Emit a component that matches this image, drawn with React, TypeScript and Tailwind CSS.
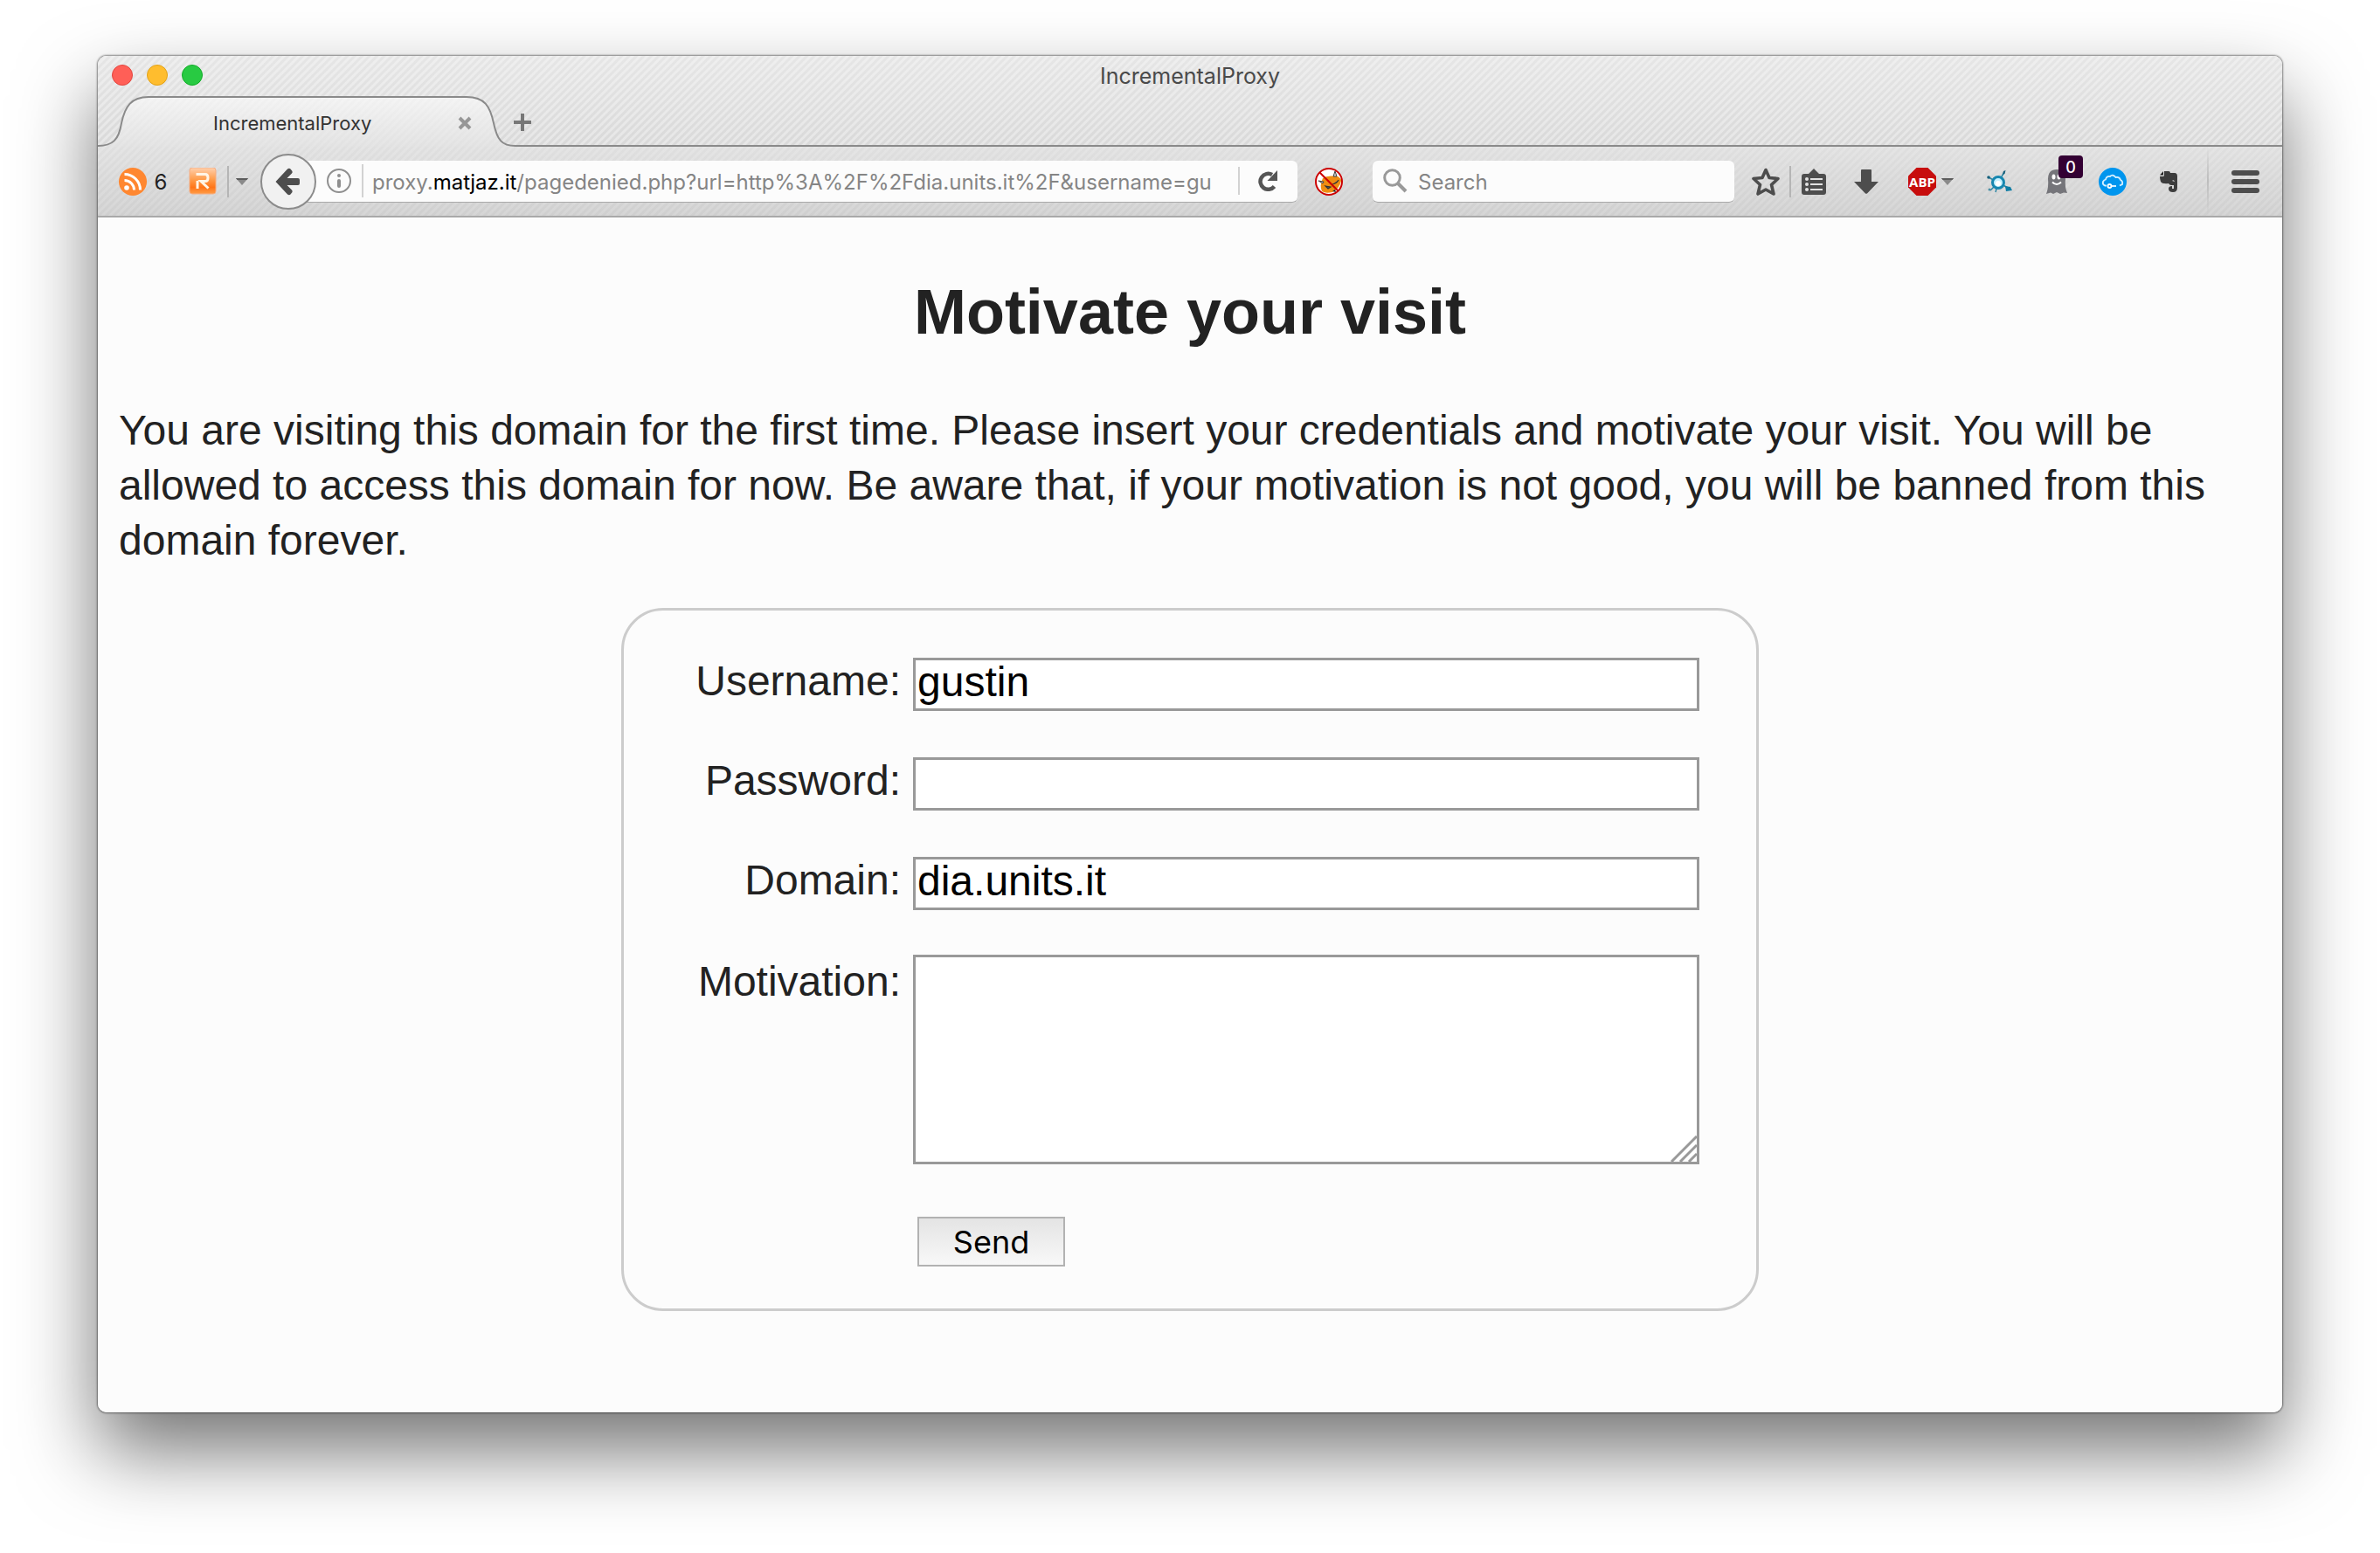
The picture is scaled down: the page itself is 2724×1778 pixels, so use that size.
import React from "react";

const stripes =
  "bg-[repeating-linear-gradient(135deg,rgba(255,255,255,0.35)_0px,rgba(255,255,255,0.35)_2px,rgba(255,255,255,0)_3px,rgba(255,255,255,0)_5px,rgba(255,255,255,0.35)_6px)]";

function Caret() {
  return (
    <svg className="h-2 w-3.5 shrink-0" viewBox="0 0 14 8">
      <path d="M0 0h14L7 8z" fill="#8a8a8a" />
      <path d="M0 0h14l-1.5 2h-11z" fill="#5d5d5d" />
    </svg>
  );
}

function TitleBar() {
  return (
    <div className="relative flex h-[46px] items-center justify-center">
      <div className="absolute left-4 top-2.5 flex gap-4">
        <button aria-label="Close" className="size-6 rounded-full border border-[#e2463f] bg-[#ff5f57]" />
        <button aria-label="Minimize" className="size-6 rounded-full border border-[#e1a116] bg-[#ffbd2e]" />
        <button aria-label="Zoom" className="size-6 rounded-full border border-[#12ac28] bg-[#28ca42]" />
      </div>
      <h2 className="text-[25px] leading-8 text-[#4a4a4a]">IncrementalProxy</h2>
    </div>
  );
}

function TabStrip() {
  return (
    <div className="relative flex h-[58px] items-end">
      <svg className="absolute inset-0 h-full w-full" aria-hidden="true">
        <defs>
          <linearGradient id="tab" x1="0" y1="0" x2="0" y2="1">
            <stop offset="0" stopColor="#f8f8f8" />
            <stop offset="1" stopColor="#e4e4e4" />
          </linearGradient>
        </defs>
        <path
          d="M0 58C17 58 24 50 27 31C31 12 38 1 58 1H422C443 1 449 12 453 31C457 50 462 58 478 58z"
          fill="url(#tab)"
          fillOpacity="0.75"
        />
        <path
          d="M0 57C17 57 24 50 27 31C31 12 38 1 58 1H422C443 1 449 12 453 31C457 50 462 57 478 57H4000"
          fill="none"
          stroke="#8a8a8a"
          strokeWidth="2"
        />
      </svg>
      <div className="relative flex h-full w-[476px] items-center pt-1">
        <span className="flex-1 pl-[132px] text-[22px] text-[#333]">IncrementalProxy</span>
        <button aria-label="Close tab" className="mr-[48px]">
          <svg className="size-4" viewBox="0 0 16 16">
            <path d="M2 2L14 14M14 2L2 14" stroke="#979797" strokeWidth="4" />
          </svg>
        </button>
      </div>
      <button aria-label="New tab" className="relative mb-[18px]">
        <svg className="size-5" viewBox="0 0 20 20">
          <path d="M10 0V20M0 10H20" stroke="#777" strokeWidth="4" />
        </svg>
      </button>
    </div>
  );
}

function RssIcon() {
  return (
    <svg className="size-8" viewBox="0 0 32 32">
      <circle cx="16" cy="16" r="16" fill="#ff8730" />
      <circle cx="9" cy="23" r="2.8" fill="#fff" />
      <path d="M6.500 14.500A11 11 0 0 1 17.500 25.500M6.500 7.500A18 18 0 0 1 24.500 25.500" fill="none" stroke="#fff" strokeWidth="3" />
    </svg>
  );
}

function ReaderIcon() {
  return (
    <svg className="h-[31px] w-8" viewBox="0 0 32 31">
      <defs>
        <linearGradient id="reader" x1="0" y1="0" x2="0" y2="1">
          <stop offset="0" stopColor="#ffd0ad" />
          <stop offset="0.45" stopColor="#ff9c4a" />
          <stop offset="0.75" stopColor="#ff7518" />
          <stop offset="1" stopColor="#ff9d48" />
        </linearGradient>
      </defs>
      <rect x="1" y="0" width="30" height="30" rx="3" fill="url(#reader)" stroke="#f5ad83" />
      <path d="M10 24V15M8.500 7.500H19Q22 7.500 22 11.500T19 15.500H14L22.500 23.500" fill="none" stroke="#fff5e6" strokeWidth="3" />
    </svg>
  );
}

function BackButton() {
  return (
    <button aria-label="Back" className="relative z-10 grid size-16 shrink-0 place-items-center rounded-full border-2 border-[#8b8b8b] bg-[#f1f1f1]">
      <svg className="size-8" viewBox="0 0 32 32">
        <path
          d="M1.500 16L15 1.500Q17 0 18.500 1.500L20.500 4Q21 5.500 20 6.500L14.500 12H27Q29 12 29 14V18Q29 20 27 20H14.500L20 25.500Q21 26.500 20.500 28L18.500 30.500Q17 32 15 30.500z"
          fill="#4d4d4d"
        />
      </svg>
    </button>
  );
}

function UrlBar() {
  return (
    <div className="-ml-6 flex h-12 min-w-0 flex-1 items-center rounded-r-md border-b border-[#a9a9a9] bg-[#fcfcfc] pl-9">
      <button aria-label="Site information">
        <svg className="size-7" viewBox="0 0 28 28">
          <circle cx="14" cy="14" r="13" fill="none" stroke="#8f8f8f" strokeWidth="2" />
          <circle cx="14" cy="8" r="2" fill="#8f8f8f" />
          <rect x="12" y="12" width="4" height="10" rx="2" fill="#8f8f8f" />
        </svg>
      </button>
      <span className="ml-3 h-[38px] w-0.5 bg-[#d2d2d2]" />
      <div className="ml-2.5 min-w-0 flex-1 overflow-hidden whitespace-nowrap pt-1 text-[24px] text-[#858585]">
        proxy.<span className="text-black">matjaz.it</span>/pagedenied.php?url=http%3A%2F%2Fdia.units.it%2F&amp;username=gu
      </div>
      <span className="h-8 w-0.5 bg-[#d2d2d2]" />
      <button aria-label="Reload" className="ml-5 mr-[22px]">
        <svg className="size-6" viewBox="0 0 24 24">
          <path d="M19.500 18.500A9 9 0 1 1 17 5" fill="none" stroke="#555" strokeWidth="4.500" />
          <path d="M23 0V12H11.500z" fill="#555" />
        </svg>
      </button>
    </div>
  );
}

function BlockedFoxIcon() {
  return (
    <svg className="size-8" viewBox="0 0 32 32">
      <circle cx="16" cy="16" r="15" fill="#fff" />
      <path d="M9 12Q13 9 20 9.500L26 10Q30 12 30 15Q28 24 20 28Q12 30 8 27Q5 20 9 12z" fill="#ef8d12" />
      <path d="M4 15L10 16L9 18zM21 10L23 4L25 10z" fill="#ccc" stroke="#444" strokeWidth="1" />
      <path d="M12 21L18 22L15 24zM20 19Q25 18 27 14" fill="#556" stroke="#333" strokeWidth="1.200" />
      <path d="M20 27L23 25L24 28z" fill="#222" />
      <path d="M5.500 5.500L26.500 26.500" stroke="#c00" strokeWidth="2" />
      <circle cx="16" cy="16" r="15" fill="none" stroke="#c00" strokeWidth="2" />
    </svg>
  );
}

function Toolbar() {
  return (
    <div className="relative flex h-[81px] items-center border-b-2 border-[#a9a9a9] bg-linear-to-b from-[#e4e4e4]/60 to-[#cfcfcf]/60 pl-6">
      <button aria-label="Feeds" className="flex items-center gap-2 text-[24px] text-[#222]">
        <RssIcon />
        <span className="w-4 pt-0.5">6</span>
      </button>
      <button aria-label="Reader" className="ml-6"><ReaderIcon /></button>
      <span className="ml-3 h-9 w-0.5 bg-[#b5b5b5]" />
      <button aria-label="Reader menu" className="ml-2 mr-3.5"><Caret /></button>
      <BackButton />
      <UrlBar />
      <button aria-label="Blocked content" className="ml-5 mr-[34px]"><BlockedFoxIcon /></button>
      <label className="flex h-12 w-[414px] items-center gap-3 rounded-md border-b border-[#a9a9a9] bg-[#fcfcfc] pl-3">
        <svg className="size-7 shrink-0" viewBox="0 0 28 28" aria-hidden="true">
          <circle cx="10.500" cy="10.500" r="8.800" fill="none" stroke="#999" strokeWidth="3" />
          <path d="M17 17L26 26" stroke="#999" strokeWidth="4" />
        </svg>
        <input aria-label="Search" placeholder="Search" className="min-w-0 flex-1 bg-transparent pt-1 text-[24px] outline-none placeholder:text-[#858585]" />
      </label>
      <button aria-label="Bookmark" className="ml-[18px]">
        <svg className="size-9" viewBox="0 0 36 36">
          <path d="M18 4.500L22 13.500L32 14.500L24.500 21.500L27 32L18 27L9 32L11.500 21.500L4 14.500L14 13.500z" fill="none" stroke="#4d4d4d" strokeWidth="3.600" strokeLinejoin="round" />
        </svg>
      </button>
      <span className="ml-[9px] h-9 w-0.5 bg-[#b5b5b5]" />
      <button aria-label="Bookmarks list" className="ml-3">
        <svg className="h-[30px] w-7" viewBox="0 0 28 30">
          <path d="M3 6H8L14 0L20 6H25Q28 6 28 9V27Q28 30 25 30H3Q0 30 0 27V9Q0 6 3 6z" fill="#4d4d4d" />
          <g fill="#e2e2e2">
            <circle cx="6" cy="12" r="2" /><circle cx="6" cy="18" r="2" /><circle cx="6" cy="24" r="2" />
            <rect x="10" y="11" width="14" height="2" /><rect x="10" y="17" width="14" height="2" /><rect x="10" y="23" width="14" height="2" />
          </g>
        </svg>
      </button>
      <button aria-label="Downloads" className="ml-8">
        <svg className="size-7" viewBox="0 0 28 28">
          <path d="M9 0H19Q20 0 20 1V14H28L15 27.500Q14 28 13 27.500L0 14H8V1Q8 0 9 0z" fill="#4d4d4d" />
        </svg>
      </button>
      <button aria-label="Adblock Plus" className="ml-[34px] flex items-center gap-1.5">
        <svg className="size-8" viewBox="0 0 32 32">
          <path d="M9.500 0H22.500L32 9.500V22.500L22.500 32H9.500L0 22.500V9.500z" fill="#c70d0d" />
          <text x="16" y="21.500" textAnchor="middle" fontFamily="Open Sans" fontWeight="700" fontSize="15" fill="#fff">ABP</text>
        </svg>
        <Caret />
      </button>
      <button aria-label="Network" className="ml-[37px]">
        <svg className="size-8" viewBox="0 0 32 32">
          <path d="M14 17L21 5M14 17L3 11M14 17L5 26M14 17L27 24M14 17L11 28" stroke="#2b86a3" strokeWidth="1.500" />
          <path d="M19 8L20 4L22.500 3L21.500 7z" fill="#17607c" />
          <circle cx="3" cy="11" r="1.800" fill="#17607c" />
          <circle cx="4" cy="25" r="1.500" fill="#4a8ea4" />
          <path d="M22 21L28 22L30 26L23 27z" fill="#0f7da4" />
          <circle cx="14" cy="17" r="6.500" fill="#c4f0ff" stroke="#1787b0" strokeWidth="3" />
          <circle cx="14" cy="18" r="3" fill="#fff" />
        </svg>
      </button>
      <button aria-label="Ghostery" className="relative ml-9">
        <svg className="h-7 w-[26px]" viewBox="0 0 26 28">
          <path d="M1 28Q4 20 3 11Q3 0 13 0T23 11Q22 20 25 27L21 26.500L17 28L13 26L9 28L6 26.500z" fill="#75757a" />
          <ellipse cx="9.500" cy="8.500" rx="2" ry="3" fill="#fff" /><ellipse cx="15.500" cy="8.500" rx="2" ry="3" fill="#fff" />
          <path d="M8 14.500Q13 19.500 18 14.500" fill="none" stroke="#fff" strokeWidth="2" />
        </svg>
        <span className="absolute -top-4 left-[15px] grid h-[26px] w-7 place-items-center rounded bg-[#330033] text-[18px] font-medium text-white">0</span>
      </button>
      <button aria-label="Cloud" className="ml-[35px]">
        <svg className="size-8" viewBox="0 0 32 32">
          <circle cx="16" cy="16" r="16" fill="#0095ee" />
          <path d="M9 20.500H7Q4 19 5 16Q6 14 8 13.500Q9 9.500 13 10Q16 7 19.500 11Q24 10 25 14Q28 15.500 27 19L24 20.500M15 21H20" fill="none" stroke="#d4efff" strokeWidth="1.800" />
          <circle cx="12.500" cy="21" r="2" fill="none" stroke="#fff" strokeWidth="1.800" />
        </svg>
      </button>
      <button aria-label="Evernote" className="ml-[38px]">
        <svg className="h-6 w-5" viewBox="0 0 20 24">
          <path d="M5 0H10Q12 0 12 2H17Q20 2 20 6V19Q20 24 15 24Q10 24 10 20Q10 17 14 17V20H16V16H13Q11 16 10 14Q3 15 1 12Q0 9 0 6H4Q5 6 5 4z" fill="#3d3d3d" />
          <path d="M0 4.500L4 0V4.500z" fill="#222" />
          <path d="M14 11Q16 9 17 12z" fill="#ddd" />
        </svg>
      </button>
      <span className="ml-[34px] h-full w-0.5 bg-linear-to-b from-transparent via-[#bdbdbd] to-transparent" />
      <button aria-label="Menu" className="mx-[26px] flex w-8 flex-col gap-1">
        <span className="h-1.5 rounded-full bg-[#4d4d4d]" />
        <span className="h-1.5 rounded-full bg-[#4d4d4d]" />
        <span className="h-1.5 rounded-full bg-[#4d4d4d]" />
      </button>
    </div>
  );
}

const field = "block w-full border-3 border-[#999] bg-white px-0.5 text-[48px] text-black outline-none";
const label = "pr-3.5 text-right text-[48px] leading-[54px]";

function VisitForm() {
  return (
    <form className="mx-auto mt-[46px] grid w-[1302px] max-w-full grid-cols-[1fr_900px] rounded-[48px] border-3 border-[#ccc] pb-12 pl-12 pr-[65px] pt-[54px]" onSubmit={(e) => e.preventDefault()}>
      <label htmlFor="username" className={label}>Username:</label>
      <input id="username" defaultValue="gustin" className={field + " mb-[53px] h-[61px] pb-1.5"} />
      <label htmlFor="password" className={label}>Password:</label>
      <input id="password" type="password" className={field + " mb-[53px] h-[61px] pb-1.5"} />
      <label htmlFor="domain" className={label}>Domain:</label>
      <input id="domain" defaultValue="dia.units.it" className={field + " mb-[51px] h-[61px] pb-1.5"} />
      <label htmlFor="motivation" className={label + " pt-1"}>Motivation:</label>
      <div className="relative mb-[60px] h-60">
        <textarea id="motivation" className={field + " h-full resize-none"} />
        <svg className="absolute bottom-[3px] right-[3px] size-[30px]" viewBox="0 0 30 30" aria-hidden="true">
          <path d="M1 30L30 1M11 30L30 11M21 30L30 21" stroke="#999" strokeWidth="3" />
        </svg>
      </div>
      <button className="col-start-2 ml-[5px] h-[57px] w-[169px] border-2 border-[#b2b2b2] bg-linear-to-b from-[#e4e4e4] to-[#f8f8f8] font-[Inter] text-[36px] leading-none text-black">
        Send
      </button>
    </form>
  );
}

export default function App() {
  return (
    <div className="min-h-screen bg-white px-28 pb-40 pt-16">
      <div className="rounded-[10px] shadow-[0_0_2px_1px_rgba(0,0,0,0.45),0_44px_90px_0px_rgba(0,0,0,0.55)]">
        <div className="overflow-hidden rounded-[10px] bg-[#fcfcfc]">
          <header className="relative bg-linear-to-b from-[#e6e6e6] to-[#cfcfcf] font-[Inter]">
            <div className={"absolute inset-0 " + stripes} />
            <TitleBar />
            <TabStrip />
            <Toolbar />
          </header>
          <main className="px-6 pb-[116px] pt-[66px] font-['Liberation_Sans'] text-[#222]">
            <h1 className="text-center text-[72px] font-bold leading-[84px]">Motivate your visit</h1>
            <p className="mt-[62px] text-[48px] leading-[63px]">
              You are visiting this domain for the first time. Please insert your credentials and motivate your visit. You will be allowed to access this domain for now. Be aware that, if your motivation is not good, you will be banned from this domain forever.
            </p>
            <VisitForm />
          </main>
        </div>
      </div>
    </div>
  );
}
